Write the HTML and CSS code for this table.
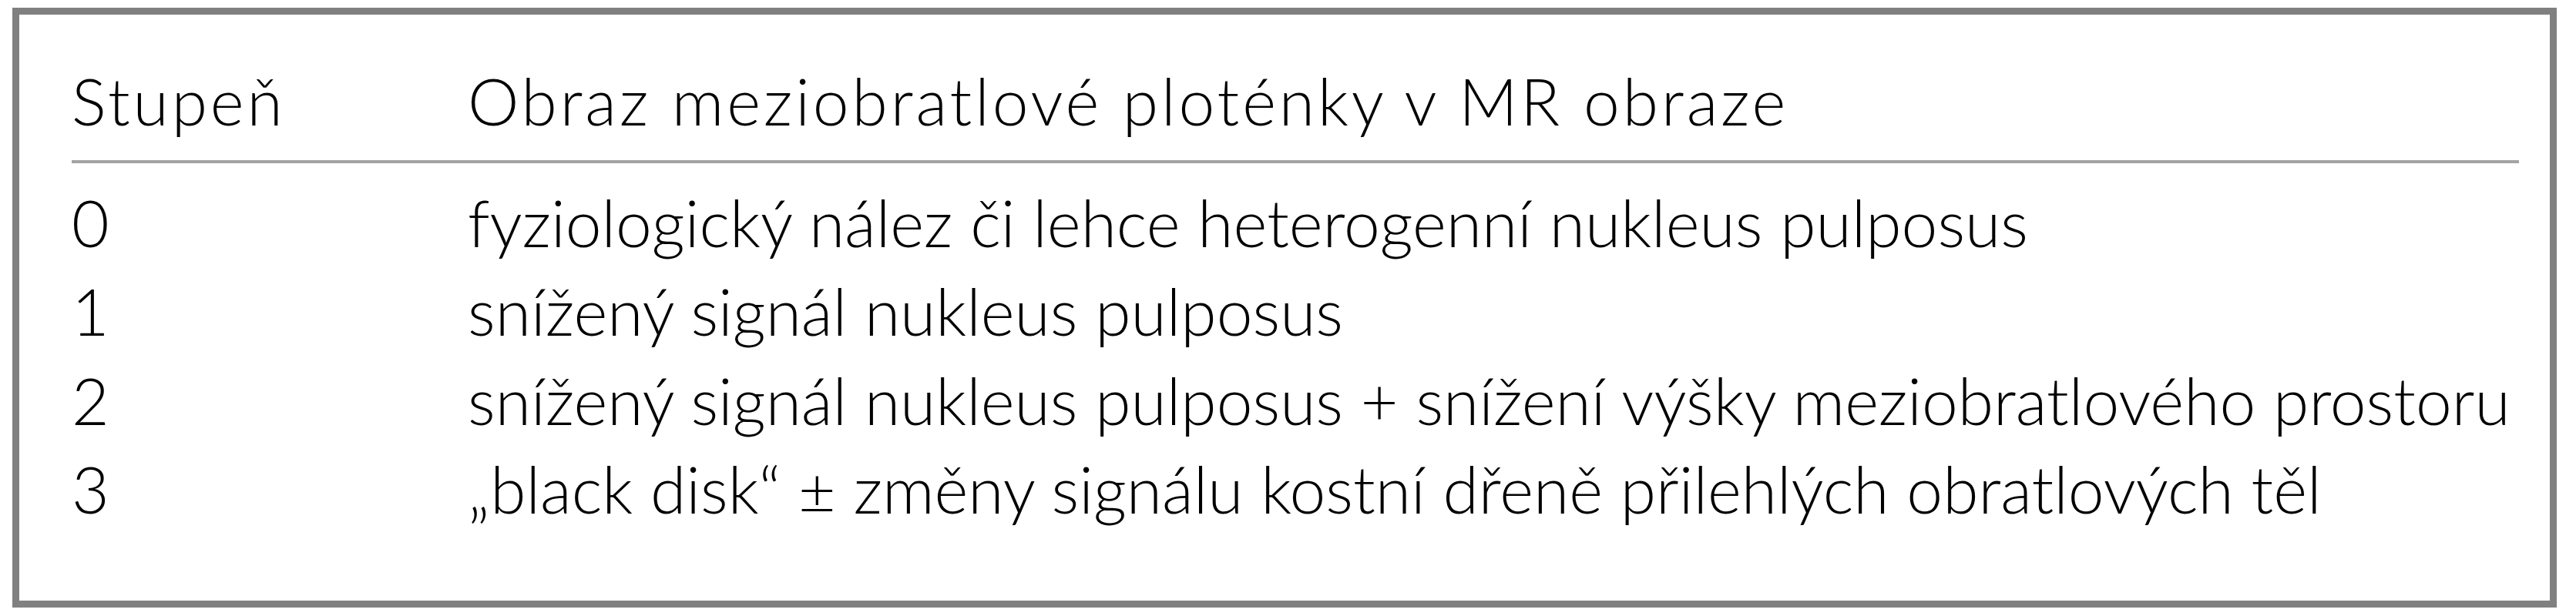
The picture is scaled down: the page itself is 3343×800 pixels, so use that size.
FILE: index.html
```html
<!DOCTYPE html>
<html lang="cs">
<head>
<meta charset="utf-8">
<title>Stupeň degenerace</title>
<link rel="stylesheet" href="styles.css">
</head>
<body>
<div class="frame">
  <div class="grades">
    <div class="cell head">Stupeň</div>
    <div class="cell head">Obraz meziobratlové ploténky v MR obraze</div>
    <div class="cell first">0</div>
    <div class="cell first">fyziologický nález či lehce heterogenní nukleus pulposus</div>
    <div class="cell">1</div>
    <div class="cell">snížený signál nukleus pulposus</div>
    <div class="cell">2</div>
    <div class="cell">snížený signál nukleus pulposus + snížení výšky meziobratlového prostoru</div>
    <div class="cell">3</div>
    <div class="cell">„black disk“ ± změny signálu kostní dřeně přilehlých obratlových těl</div>
  </div>
</div>
</body>
</html>
```
FILE: styles.css
```css
html, body {
  margin: 0;
  padding: 0;
  background: #ffffff;
}
.frame {
  box-sizing: border-box;
  margin: 10px 0 0 16px;
  width: 3302px;
  height: 779px;
  border: 9px solid #808080;
  padding: 54px 40px 0 68px;
  font-family: Lato, "Open Sans", sans-serif;
  font-weight: 300;
  font-size: 84px;
  line-height: 115.5px;
  color: #000000;
}
.grades {
  display: grid;
  grid-template-columns: 514px minmax(0, 1fr);
}
.cell {
  white-space: nowrap;
}
.head {
  padding-bottom: 19px;
  border-bottom: 4px solid #a3a3a3;
  letter-spacing: 3.9px;
}
.first {
  padding-top: 19px;
}
```
